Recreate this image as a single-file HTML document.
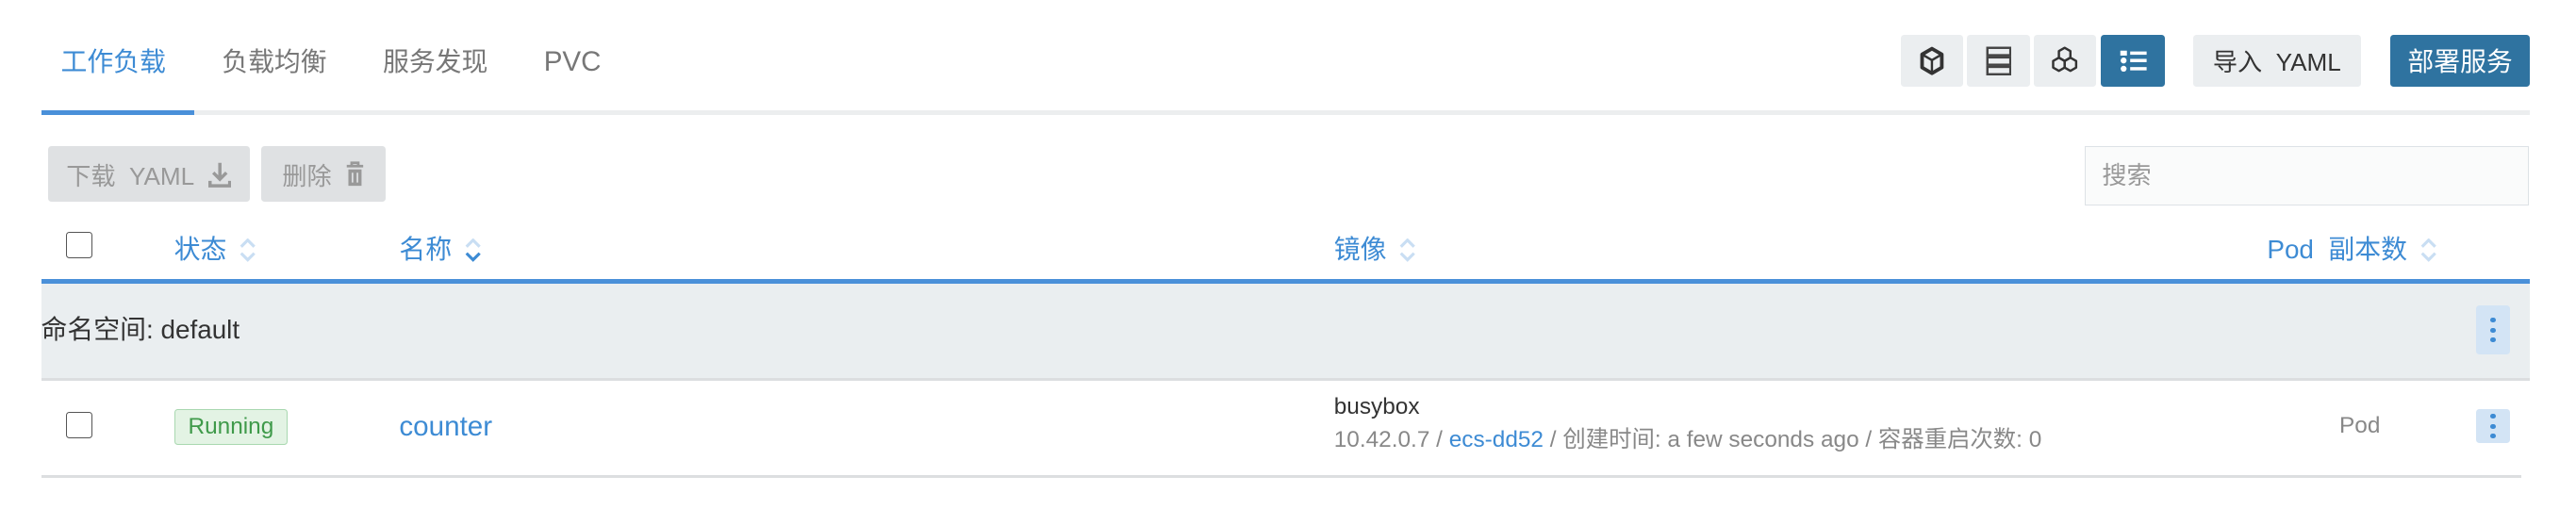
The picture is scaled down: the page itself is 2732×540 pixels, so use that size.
<!DOCTYPE html>
<html><head><meta charset="utf-8"><style>
html,body{margin:0;padding:0;background:#fff;width:2732px;height:540px;overflow:hidden}
#w{zoom:1.7423;width:1568px;height:310px;position:relative;font-family:"Liberation Sans","Noto Sans CJK SC",sans-serif;color:#222}
.a{position:absolute;white-space:nowrap}
.tab{font-size:16px;color:#777;top:27px;line-height:22px;height:22px}
.btn{position:absolute;top:21px;height:32px;background:#ebeef0;border-radius:2px;display:flex;align-items:center;justify-content:center}
.blue{color:#3d8bd4}
.hd{font-size:16px;top:141px;color:#3d8bd4;line-height:22px}
.sort{display:inline-block;vertical-align:middle;margin-left:8px}
.cb{position:absolute;width:15px;height:15px;border:1px solid #555;border-radius:2px;background:#fff}
.keb{position:absolute;width:21px;background:#d3e4f5;border-radius:2px;display:flex;flex-direction:column;align-items:center;justify-content:center;gap:3px}
.keb i{width:3px;height:3px;border-radius:50%;background:#3d8bd4;display:block}
</style></head><body><div id="w">
<div class="a tab" style="left:37px;color:#3d8bd4">工作负载</div>
<div class="a tab" style="left:135px">负载均衡</div>
<div class="a tab" style="left:233px">服务发现</div>
<div class="a tab" style="left:331px;font-size:17px">PVC</div>
<div class="a" style="left:25px;top:67px;width:1515px;height:3px;background:#eceeef"></div>
<div class="a" style="left:25px;top:67px;width:93px;height:3px;background:#4a90d9"></div>

<div class="btn" style="left:1157px;width:38px"><svg width="16" height="18" viewBox="0 0 16 18"><path d="M8 1.5L14 5v8l-6 3.5L2 13V5z" fill="none" stroke="#333" stroke-width="2.2" stroke-linejoin="round"/><path d="M2.5 5.3L8 8.5l5.5-3.2M8 8.5v7.5" fill="none" stroke="#333" stroke-width="1.4"/></svg></div>
<div class="btn" style="left:1197px;width:39px"><svg width="16" height="18" viewBox="0 0 16 18"><g fill="none" stroke="#444" stroke-width="1.4"><rect x="1" y="1" width="14" height="4.5"/><rect x="1" y="6.8" width="14" height="4.5"/><rect x="1" y="12.6" width="14" height="4.5"/></g></svg></div>
<div class="btn" style="left:1238px;width:38px"><svg width="18" height="18" viewBox="0 0 18 18"><g fill="none" stroke="#333" stroke-width="1.4" stroke-linejoin="round"><path d="M9 1l3.5 2v4L9 9 5.5 7V3z"/><path d="M5.5 7L9 9v4l-3.5 2L2 13V9z"/><path d="M12.5 7L16 9v4l-3.5 2L9 13V9z"/></g></svg></div>
<div class="btn" style="left:1279px;width:39px;background:#2f73a0"><svg width="18" height="14" viewBox="0 0 18 14"><g fill="#fff"><rect x="1" y="1" width="4" height="3"/><rect x="7" y="1.5" width="10" height="2"/><circle cx="3" cy="7" r="1.8"/><rect x="7" y="6" width="10" height="2"/><circle cx="3" cy="12" r="1.8"/><rect x="7" y="11" width="10" height="2"/></g></svg></div>
<div class="btn" style="left:1335px;width:102px;font-size:15px;color:#333">导入&nbsp;&nbsp;YAML</div>
<div class="btn" style="left:1455px;width:85px;background:#2f73a0;color:#fff;font-size:16px">部署服务</div>

<div class="btn" style="left:29px;top:89px;height:34px;width:123px;background:#dfe1e3;color:#999;font-size:15px">下载&nbsp;&nbsp;YAML&nbsp;&nbsp;<svg width="14" height="16" viewBox="0 0 14 16"><path d="M7 1v10M3 7l4 4 4-4M1 12v3h12v-3" fill="none" stroke="#999" stroke-width="2"/></svg></div>
<div class="btn" style="left:159px;top:89px;height:34px;width:76px;background:#dfe1e3;color:#999;font-size:15px">删除&nbsp;&nbsp;<svg width="12" height="16" viewBox="0 0 12 16"><path d="M1 3h10M4 3V1h4v2" stroke="#999" stroke-width="1.6" fill="none"/><rect x="2" y="5" width="8" height="10" fill="#999"/><path d="M4.5 7v6M7.5 7v6" stroke="#dfe1e3" stroke-width="1"/></svg></div>
<div class="a" style="left:1269px;top:89px;width:269px;height:35px;border:1px solid #dde2e6;background:#fafbfb;font-size:15px;color:#999;line-height:35px;text-indent:10px">搜索</div>

<div class="cb" style="left:40px;top:141px"></div>
<svg width="0" height="0" style="position:absolute"><defs><g id="s"><path d="M1 5l4-4 4 4" fill="none" stroke="#c9def3" stroke-width="1.8"/><path d="M1 9l4 4 4-4" fill="none" stroke="#c9def3" stroke-width="1.8"/></g></defs></svg>
<div class="a hd" style="left:106px">状态<svg class="sort" width="10" height="15"><use href="#s"/></svg></div>
<div class="a hd" style="left:243px">名称<svg class="sort" width="10" height="15"><path d="M1 5l4-4 4 4" fill="none" stroke="#c9def3" stroke-width="1.8"/><path d="M1 9l4 4 4-4" fill="none" stroke="#3d8bd4" stroke-width="1.8"/></svg></div>
<div class="a hd" style="left:812px">镜像<svg class="sort" width="10" height="15"><use href="#s"/></svg></div>
<div class="a hd" style="left:1380px">Pod&nbsp;&nbsp;副本数<svg class="sort" width="10" height="15"><use href="#s"/></svg></div>

<div class="a" style="left:25px;top:170px;width:1515px;height:3px;background:#4a90d9"></div>
<div class="a" style="left:25px;top:173px;width:1515px;height:57px;background:#eaeef0"></div>
<div class="a" style="left:25px;top:230px;width:1515px;height:2px;background:#dcdee0"></div>
<div class="a" style="left:25px;top:190px;font-size:16px;color:#333;line-height:22px">命名空间: default</div>
<div class="keb" style="left:1507px;top:186px;height:30px"><i></i><i></i><i></i></div>

<div class="cb" style="left:40px;top:251px"></div>
<div class="a" style="left:106px;top:249px;width:68px;height:21px;background:#e3f3e4;border:1px solid #a9d8b0;border-radius:2px;color:#3f9a4a;font-size:14px;line-height:21px;text-align:center">Running</div>
<div class="a blue" style="left:243px;top:249px;font-size:17px;line-height:22px">counter</div>
<div class="a" style="left:812px;top:239px;font-size:14px;color:#333;line-height:18px">busybox</div>
<div class="a" style="left:812px;top:259px;font-size:14px;color:#888;line-height:18px">10.42.0.7 / <span class="blue">ecs-dd52</span> / 创建时间: a few seconds ago / 容器重启次数: 0</div>
<div class="a" style="left:1424px;top:250px;font-size:14px;color:#888;line-height:18px">Pod</div>
<div class="keb" style="left:1507px;top:249px;height:21px"><i></i><i></i><i></i></div>
<div class="a" style="left:25px;top:289px;width:1510px;height:2px;background:#dcdee0"></div>
</div></body></html>
